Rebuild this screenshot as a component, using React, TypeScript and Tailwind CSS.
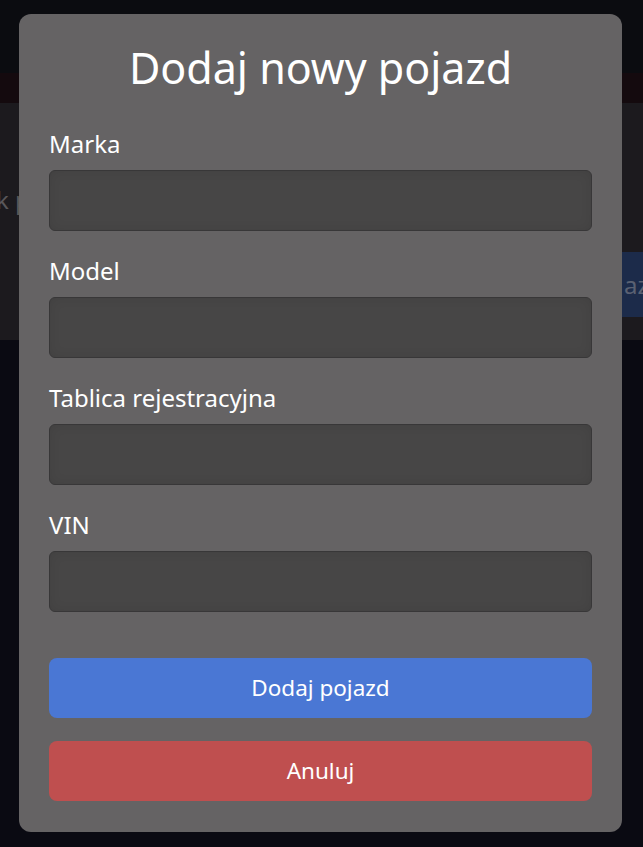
import React from "react";

const fields = ["Marka", "Model", "Tablica rejestracyjna", "VIN"];

export default function App() {
  return (
    <div
      className="relative w-[643px] h-[847px] overflow-hidden bg-[#0a0a12]"
      style={{ fontFamily: '"Noto Sans", "Open Sans", sans-serif' }}
    >
      {/* background page (dimmed) */}
      <div className="flex flex-col">
        <div className="h-[73px] bg-[#0b0c10]" />
        <div className="h-[30px] bg-[#140a0e]" />
        <div className="h-[237px] bg-[#1c1a1e] flex flex-col">
          <div className="mt-[83px] h-[28px] flex items-center">
            <span className="ml-[-4px] text-[24px] leading-[28px] text-[#59575a] whitespace-nowrap">
              k pojazdów
            </span>
          </div>
          <div className="flex justify-end mt-[38px]">
            <div className="h-[65px] w-[120px] mr-[-99px] bg-[#1c2b4a] flex items-center pl-[2px] text-[24px] text-[#5a6172] whitespace-nowrap">
              azd
            </div>
          </div>
        </div>
      </div>

      {/* modal */}
      <div className="absolute left-[19px] top-[14px] w-[603px] h-[818px] rounded-[12px] bg-[#656364] px-[30px] flex flex-col">
        <h2 className="text-[43px] leading-[52px] text-white text-center mt-[28px] mb-[10px]">
          Dodaj nowy pojazd
        </h2>
        <div className="flex flex-col">
          {fields.map((f, i) => (
            <div key={f} className="flex flex-col">
              <label
                className={
                  (i === 0 ? "mt-[26px] " : "mt-[26px] ") +
                  "text-[24px] leading-[28px] text-white mb-[12px]"
                }
              >
                {f}
              </label>
              <input
                type="text"
                className="h-[61px] w-full rounded-[6px] border border-[#383738] bg-[#474646] outline-none shadow-[inset_0_0_12px_rgba(0,0,0,0.08)]"
              />
            </div>
          ))}
        </div>
        <button className="mt-[46px] h-[60px] w-full rounded-[8px] bg-[#4a77d4] text-white text-[22.5px]">
          Dodaj pojazd
        </button>
        <button className="mt-[23px] h-[60px] w-full rounded-[8px] bg-[#bf4f4f] text-white text-[22.5px]">
          Anuluj
        </button>
      </div>
    </div>
  );
}
